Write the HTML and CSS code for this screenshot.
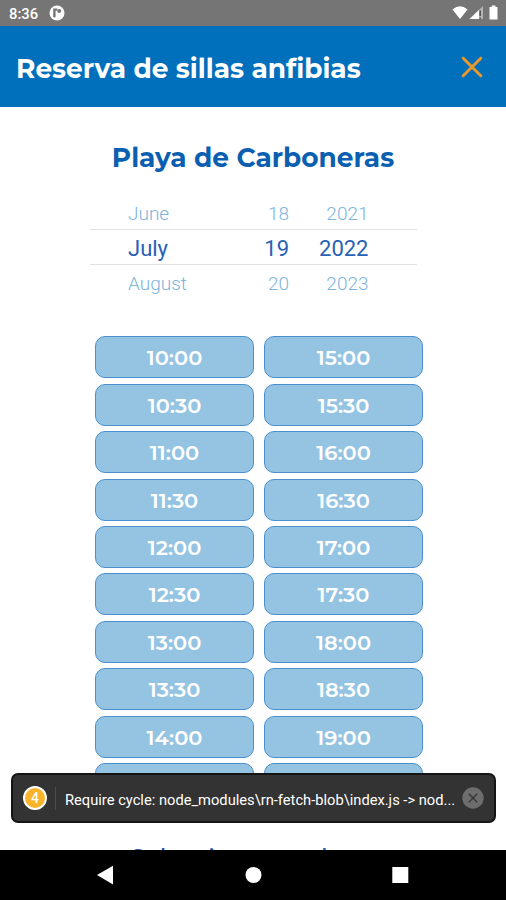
FILE: index.html
```html
<!DOCTYPE html>
<html lang="es">
    <head>
        <meta charset="utf-8">
        <title>Reserva de sillas anfibias</title>
        <meta name="viewport" content="width=device-width, initial-scale=1">
        <link rel="stylesheet" href="styles.css">
    </head>
    <body>
        <div class="statusBar">
            <div class="clock">8:36</div>
            <svg class="appIcon" width="16" height="16" viewBox="0 0 16 16">
                <circle cx="8" cy="8" r="7.5" fill="#fff"/>
                <path d="M5.4 12.2V4.6H8.4" fill="none" stroke="#757575" stroke-width="2.4"/>
                <circle cx="10.2" cy="6" r="2" fill="#757575"/>
            </svg>
            <svg class="signals" width="48" height="16" viewBox="0 0 48 16">
                <path d="M0.5 4.4Q8 -1.8 15.5 4.4L8 14z" fill="#fff"/>
                <path d="M17.5 14L31 1V14z" fill="#fff" fill-opacity=".45"/>
                <path d="M17.5 14L27 5V14z" fill="#fff"/>
                <path d="M28.2 5.5V11M28.2 12.4V14" stroke="#555" stroke-width="1.6"/>
                <path d="M37.5 2h2.3V.5h3.6V2h2.1v12.5h-8z" fill="#fff"/>
            </svg>
        </div>
        <div class="header">
            <div class="headerTitle">Reserva de sillas anfibias</div>
            <svg class="close" width="22" height="22" viewBox="0 0 22 22">
                <path d="M2.2 2.2L19.8 19.8M19.8 2.2L2.2 19.8" stroke="#e8962e" stroke-width="3" stroke-linecap="round"/>
            </svg>
        </div>
        <div class="content">
            <div class="beach">Playa de Carboneras</div>
            <div class="picker">
                <div class="row">
                    <div class="month">June</div><div class="day">18</div><div class="year">2021</div>
                </div>
                <div class="row selected">
                    <div class="month">July</div><div class="day">19</div><div class="year">2022</div>
                </div>
                <div class="row">
                    <div class="month">August</div><div class="day">20</div><div class="year">2023</div>
                </div>
            </div>
            <div class="hours">
                <div class="column">
                    <div class="hour">10:00</div>
                    <div class="hour">10:30</div>
                    <div class="hour">11:00</div>
                    <div class="hour">11:30</div>
                    <div class="hour">12:00</div>
                    <div class="hour">12:30</div>
                    <div class="hour">13:00</div>
                    <div class="hour">13:30</div>
                    <div class="hour">14:00</div>
                    <div class="hour"></div>
                </div>
                <div class="column">
                    <div class="hour">15:00</div>
                    <div class="hour">15:30</div>
                    <div class="hour">16:00</div>
                    <div class="hour">16:30</div>
                    <div class="hour">17:00</div>
                    <div class="hour">17:30</div>
                    <div class="hour">18:00</div>
                    <div class="hour">18:30</div>
                    <div class="hour">19:00</div>
                    <div class="hour"></div>
                </div>
            </div>
            <div class="hint">Seleccione una hora</div>
        </div>
        <div class="navBar">
            <svg width="506" height="50" viewBox="0 0 506 50">
                <path d="M97 25L113 15.8V34.6z" fill="#fff"/>
                <circle cx="253.5" cy="25" r="8" fill="#fff"/>
                <rect x="392.3" y="17" width="16" height="16" fill="#fff"/>
            </svg>
        </div>
        <div class="warning">
            <div class="count">4</div>
            <div class="message">Require cycle: node_modules\rn-fetch-blob\index.js -&gt; nod...</div>
            <svg class="dismiss" width="22" height="22" viewBox="0 0 22 22">
                <circle cx="11" cy="11" r="10.7" fill="#6d6d6d"/>
                <path d="M6.8 6.8L15.2 15.2M15.2 6.8L6.8 15.2" stroke="#333" stroke-width="1.3"/>
            </svg>
        </div>
    </body>
</html>
```
FILE: styles.css
```css
body{
    margin: 0px;
    padding: 0px;
    height: 900px;
    display: flex;
    flex-direction: column;
    position: relative;
    overflow: hidden;
    background-color: #ffffff;
    font-family: Montserrat, Inter, sans-serif;
}
.statusBar{
    height: 26px;
    flex: none;
    display: flex;
    align-items: center;
    padding: 0px 6px 0px 9px;
    background-color: #757575;
    color: #ffffff;
}
.clock{
    width: 40px;
    padding-top: 2px;
    font: 500 14.8px/24px Roboto, sans-serif;
}
.signals{
    margin-left: auto;
}
.header{
    height: 81px;
    flex: none;
    display: flex;
    align-items: center;
    justify-content: space-between;
    padding: 0px 23px 0px 16px;
    box-sizing: border-box;
    background-color: #0070bc;
}
.headerTitle{
    padding-top: 3px;
    font-size: 26.4px;
    font-weight: 700;
    color: #ffffff;
    white-space: nowrap;
}
.content{
    height: 743px;
    flex: none;
    overflow: hidden;
}
.beach{
    padding-top: 35px;
    text-align: center;
    font-size: 26.4px;
    font-weight: 700;
    line-height: 32px;
    color: #0b5fb0;
}
.picker{
    width: 327px;
    margin: 21px 0px 0px 90px;
}
.row{
    height: 34px;
    display: flex;
    font: 300 19px/37px Roboto, sans-serif;
    color: #7db3dd;
}
.row.selected{
    border-top: 1px solid #dfe1e3;
    border-bottom: 1px solid #dfe1e3;
    font-size: 22px;
    line-height: 38px;
    font-weight: 400;
    color: #2861b5;
}
.month{
    width: 90px;
    padding-left: 38px;
}
.day{
    width: 71px;
    text-align: right;
}
.year{
    width: 79.5px;
    text-align: right;
}
.hours{
    display: flex;
    gap: 10px;
    margin: 37.4px 0px 0px 95px;
}
.column{
    display: flex;
    flex-direction: column;
    gap: 5.4px;
}
.hour{
    width: 159px;
    height: 42px;
    box-sizing: border-box;
    border: 1px solid #4b8fcc;
    border-radius: 10px;
    background-color: #95c4e3;
    color: #ffffff;
    font-size: 21px;
    font-weight: 600;
    line-height: 41px;
    text-align: center;
}
.hint{
    margin-top: 38px;
    text-align: center;
    font-size: 24px;
    font-weight: 500;
    line-height: 30px;
    color: #1d55b0;
}
.navBar{
    height: 50px;
    flex: none;
    background-color: #000000;
}
/* warning toast over the page */
.warning{
    position: absolute;
    top: 773px;
    left: 11px;
    width: 485px;
    height: 50px;
    box-sizing: border-box;
    border: 2px solid #151515;
    border-radius: 7px;
    background-color: #333333;
    display: flex;
    align-items: center;
    padding: 0px 10px;
    color: #ffffff;
}
.count{
    width: 20px;
    height: 20px;
    border: 2px solid #ffffff;
    border-radius: 50%;
    background-color: #fab42b;
    font: 500 14px/20px Roboto, sans-serif;
    text-align: center;
}
.message{
    margin-left: 8px;
    padding: 3px 0px 0px 9px;
    border-left: 1px solid #4c4c4c;
    font: 400 14.7px/20px Roboto, sans-serif;
    white-space: nowrap;
}
.dismiss{
    margin-left: auto;
}
```
